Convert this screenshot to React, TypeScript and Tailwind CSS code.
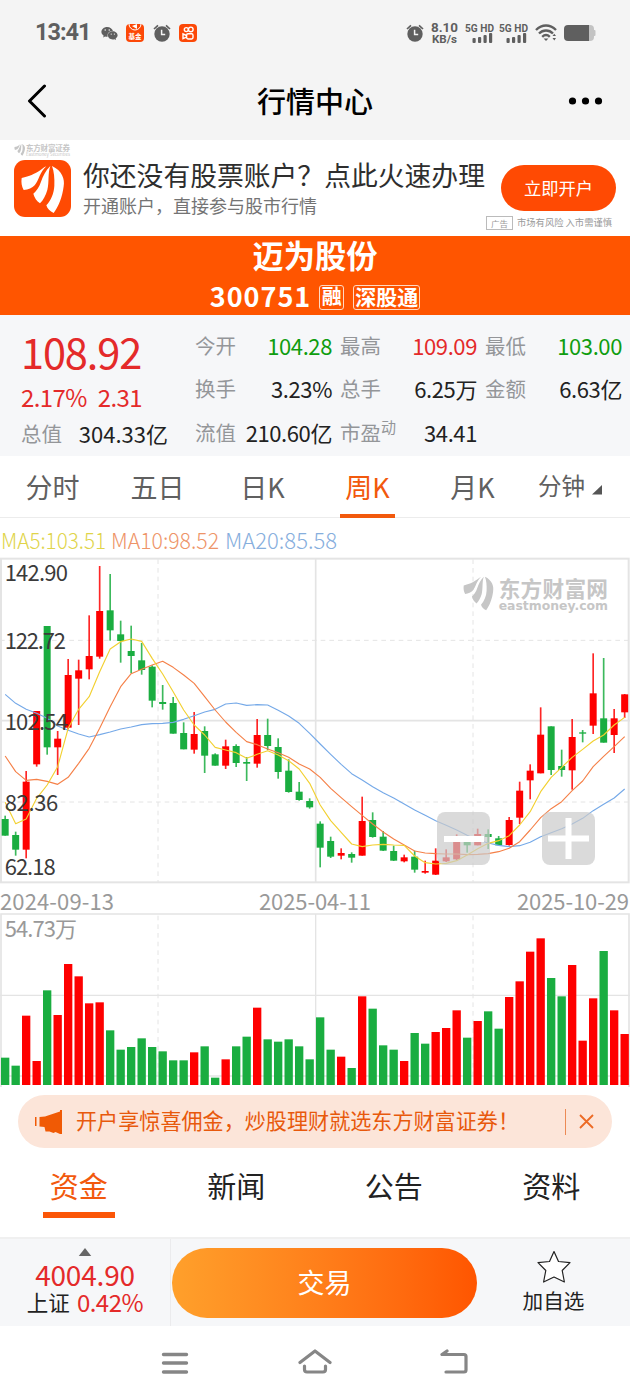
import React from "react";
import { FaWeixin } from "react-icons/fa";

type Candle = [number, number, number, number, number];

// up flag, high, body top, body bottom, low (3 plot units per css pixel)
const candles: Candle[] = [
    [0, 797, 807, 857, 857], [0, 845, 855, 899, 917], [1, 663, 695, 899, 925], [1, 483, 483, 643, 650],
    [0, 228, 228, 592, 614], [1, 543, 566, 592, 675], [1, 327, 375, 533, 538], [1, 329, 361, 386, 525],
    [1, 196, 318, 358, 388], [1, 48, 183, 320, 326], [0, 72, 181, 241, 272], [0, 212, 253, 273, 338],
    [0, 227, 303, 318, 370], [0, 279, 331, 360, 374], [0, 346, 350, 452, 472], [0, 405, 456, 462, 479],
    [0, 441, 459, 551, 551], [0, 517, 549, 598, 598], [1, 486, 552, 599, 611], [0, 529, 543, 617, 669],
    [0, 610, 613, 647, 647], [1, 569, 589, 647, 657], [0, 583, 588, 639, 651], [0, 621, 636, 641, 693],
    [1, 507, 555, 641, 653], [0, 506, 555, 588, 600], [0, 565, 591, 666, 686], [0, 628, 662, 726, 728],
    [0, 696, 725, 750, 752], [0, 745, 753, 772, 776], [0, 814, 821, 893, 952], [0, 860, 873, 920, 924],
    [1, 895, 909, 917, 928], [0, 907, 912, 923, 938], [1, 740, 813, 917, 917], [0, 787, 810, 861, 863],
    [0, 843, 860, 902, 903], [0, 887, 903, 932, 933], [1, 914, 922, 934, 937], [0, 902, 920, 959, 968],
    [1, 932, 963, 968, 971], [1, 895, 932, 974, 975], [1, 898, 922, 934, 936], [1, 853, 876, 928, 931],
    [0, 875, 875, 886, 908], [1, 836, 852, 886, 886], [0, 838, 852, 861, 897], [0, 858, 865, 886, 887],
    [1, 801, 810, 885, 887], [1, 695, 722, 803, 822], [1, 643, 662, 691, 748], [1, 472, 554, 670, 670],
    [0, 529, 529, 660, 675], [0, 599, 648, 660, 680], [1, 507, 561, 661, 719], [0, 540, 547, 551, 577],
    [1, 310, 430, 527, 552], [0, 324, 505, 578, 578], [1, 477, 505, 555, 609], [1, 432, 433, 487, 504],
];

const ma5 = [757, 821, 807, 745, 705, 650, 535, 478, 440, 365, 297, 275, 267, 274, 325, 372, 425, 480, 525, 555, 592, 600, 608, 625, 613, 602, 615, 632, 657, 700, 765, 812, 847, 882, 890, 885, 883, 885, 886, 918, 938, 942, 940, 932, 915, 896, 880, 872, 857, 825, 785, 725, 682, 652, 622, 598, 573, 555, 525, 502];
const ma10 = [618, 665, 691, 688, 694, 703, 682, 640, 595, 535, 470, 410, 371, 358, 345, 334, 352, 375, 400, 440, 480, 516, 547, 575, 584, 597, 608, 622, 642, 657, 682, 715, 743, 770, 796, 822, 846, 867, 885, 903, 909, 911, 912, 912, 914, 913, 911, 905, 895, 875, 840, 803, 776, 755, 722, 693, 650, 619, 590, 560];
const ma20 = [433, 460, 478, 490, 505, 528, 541, 552, 561, 554, 546, 537, 531, 524, 521, 520, 517, 508, 497, 486, 478, 462, 459, 466, 464, 465, 481, 498, 520, 550, 582, 613, 643, 671, 690, 710, 728, 744, 762, 780, 796, 812, 826, 840, 856, 870, 879, 886, 890, 887, 877, 860, 848, 836, 822, 805, 782, 763, 744, 717];

const volumes = [518, 542, 392, 528, 316, 390, 237, 274, 355, 352, 436, 494, 486, 460, 486, 499, 526, 526, 502, 484, 578, 523, 484, 455, 368, 463, 470, 463, 484, 523, 397, 494, 515, 549, 334, 371, 481, 494, 528, 444, 476, 441, 429, 376, 458, 408, 379, 431, 336, 289, 200, 160, 279, 334, 240, 467, 340, 198, 376, 447];

const RED = "#fe0000";
const GREEN = "#1aad40";
const px = (i: number) => 15.5 + i * 31.5;
const line = (ys: number[]) => ys.map((y, i) => `${px(i)},${y}`).join(" ");

// two bars where the volume colour differs from the candle colour
const volumeColor = (i: number) => {
    if (i === 40) return GREEN;
    if (i === 55) return RED;
    return candles[i][0] ? RED : GREEN;
};

const Blades = () => (
    <>
        <path d="M140 92C122 100 116 116 66 127C64 140 66 152 72 163C86 162 98 157 105 149C118 134 121 108 140 92Z" />
        <path d="M152 91C138 104 130 122 124 138C119 154 110 166 101 174C104 186 111 196 121 203C131 193 138 180 143 163C149 140 144 112 152 91Z" />
        <path d="M157 91C187 105 196 130 192 152C188 185 176 214 162 232C151 228 143 219 140 209C154 194 163 172 164 150C165 128 163 106 157 91Z" />
    </>
);

const Alarm = () => (
    <svg width="18" height="18" viewBox="0 0 18 18" fill="#5f5f5f">
        <circle cx="9" cy="10" r="7.7" />
        <path d="M1 5 5 1.3M17 5l-4-3.7" stroke="#5f5f5f" strokeWidth="1.7" />
        <path d="M8.6 5.8v4.8h3.6" fill="none" stroke="#f4f4f4" strokeWidth="1.5" />
    </svg>
);

const Signal = () => (
    <svg className="overflow-visible" width="30" height="21" viewBox="0 0 30 21" fill="#5f5f5f" fontFamily="Roboto">
        <text x="0" y="8.5" fontSize="10.5" fontWeight="700" textLength="29" lengthAdjust="spacingAndGlyphs">5G HD</text>
        <rect x="7.5" y="15" width="3.2" height="5" rx="1" />
        <rect x="13" y="14" width="3.2" height="6" rx="1" />
        <rect x="18.5" y="12" width="3.2" height="8" rx="1" />
        <rect x="24" y="10" width="3.2" height="10" rx="1" />
    </svg>
);

const StatusBar = () => (
    <div className="flex h-[66px] items-center pl-[35px] pr-[34px] text-[#5f5f5f]">
        <span className="w-[66px] font-['Roboto',sans-serif] text-[23.5px] font-bold tracking-[-1px]">13:41</span>
        <FaWeixin size={17} />
        <div className="ml-[8px] flex h-[18px] w-[18px] flex-col items-center overflow-hidden rounded-[4px] bg-[#fc4807] text-white">
            <svg width="14" height="8" viewBox="0 0 14 8">
                <path d="M1 0a6 6 0 0 0 12 0" fill="none" stroke="#fff" strokeWidth="1" />
                <path d="M4 2 9 0v5z" fill="#fff" />
            </svg>
            <span className="text-[6.5px] font-bold leading-[8px]">基金</span>
        </div>
        <div className="ml-[9px]"><Alarm /></div>
        <div className="ml-[8px] h-[18px] w-[18px] rounded-[4px] bg-[#fc4807]">
            <svg width="18" height="18" viewBox="0 0 18 18" fill="none" stroke="#fff" strokeWidth="1.4">
                <circle cx="7.3" cy="5.6" r="2" />
                <circle cx="11.8" cy="5.4" r="2.3" />
                <rect x="7.6" y="9.8" width="6.4" height="5.2" rx="1.4" />
                <path d="M7.4 11.5 4 9.9v4.8l3.4-1.6" />
            </svg>
        </div>
        <div className="ml-auto"><Alarm /></div>
        <svg className="ml-[7px] overflow-visible" width="28" height="22" viewBox="0 0 28 22" fill="#5f5f5f" fontFamily="Roboto" fontWeight="700">
            <text x="0" y="10" fontSize="13" textLength="27" lengthAdjust="spacingAndGlyphs">8.10</text>
            <text x="1" y="20.5" fontSize="11.5" textLength="25" lengthAdjust="spacingAndGlyphs">KB/s</text>
        </svg>
        <div className="ml-[6px]"><Signal /></div>
        <div className="ml-[4px]"><Signal /></div>
        <svg className="ml-[6px]" width="23" height="18" viewBox="0 0 23 18" fill="none" stroke="#5f5f5f" strokeWidth="2.4">
            <path d="M1 6C7 0 15 0 21 6M4 9.5c4-4 10-4 14 0M7.2 12.8c2.3-2.2 5.3-2.2 7.6 0" />
            <path d="M8.6 14.5 11 17l2.4-2.5z" fill="#5f5f5f" stroke="none" />
            <path d="m17.5 12 1.8-2.2L21 12zM17.5 14l1.8 2.4L21 14z" fill="#5f5f5f" stroke="none" />
        </svg>
        <svg className="ml-[6px]" width="32" height="16" viewBox="0 0 32 16">
            <rect x="20" width="10" height="16" rx="4" fill="#c3c3c3" />
            <rect x="29" y="5" width="2.5" height="6" rx="1" fill="#c3c3c3" />
            <path d="M4 0h21v16H4a4 4 0 0 1-4-4V4a4 4 0 0 1 4-4z" fill="#5f5f5f" />
        </svg>
    </div>
);

const NavBar = () => (
    <div className="flex h-[74px] items-center justify-between pb-[4px] pl-[27px] pr-[27px] text-black">
        <svg width="36" height="34" viewBox="0 0 36 34" fill="none" stroke="#000" strokeWidth="3" strokeLinecap="round" strokeLinejoin="round">
            <path d="M17.5 2 2.5 17l15 15" />
        </svg>
        <h1 className="-mt-[2px] text-[29px] font-medium leading-none">行情中心</h1>
        <svg width="36" height="8" viewBox="0 0 36 8">
            <circle cx="5.5" cy="4" r="3.6" />
            <circle cx="18.5" cy="4" r="3.6" />
            <circle cx="31.5" cy="4" r="3.6" />
        </svg>
    </div>
);

const AdBanner = () => (
    <div className="flex h-[96px] bg-white pl-[14px]">
        <div className="flex w-[69px] flex-col">
            <svg width="58" height="20" viewBox="0 0 58 20" fill="#c6c6c6">
                <g transform="translate(-5 -3.5) scale(.083)"><Blades /></g>
                <text x="12" y="11.3" fontSize="7.5" fontWeight="700" textLength="44">东方财富证券</text>
                <text x="12" y="15.8" fontSize="4.5" textLength="44" lengthAdjust="spacingAndGlyphs">Eastmoney Securities</text>
            </svg>
            <svg width="57" height="57" viewBox="43 73 171 171">
                <rect x="43" y="73" width="171" height="171" rx="33" fill="#ff4a03" />
                <g fill="#fff"><Blades /></g>
            </svg>
        </div>
        <div className="flex w-[418px] flex-col">
            <span className="mt-[21px] whitespace-nowrap text-[26.8px] leading-[28px] text-[#2e2e2e]">你还没有股票账户？点此火速办理</span>
            <span className="mt-[6px] whitespace-nowrap text-[18px] leading-[20px] text-[#747474]">开通账户，直接参与股市行情</span>
        </div>
        <div className="flex w-[129px] flex-col">
            <button className="mt-[25px] h-[46px] w-[115px] rounded-full bg-[#ff4a03] text-[17.3px] leading-none text-white">立即开户</button>
            <div className="-ml-[15px] mt-[5px] flex items-center text-[9.3px] leading-none text-[#9a9a9a]">
                <span className="flex h-[14px] w-[27px] items-center justify-center border border-[#bbb] text-[8.5px]">广告</span>
                <span className="ml-[4px] whitespace-nowrap">市场有风险 入市需谨慎</span>
            </div>
        </div>
    </div>
);

const StockTitle = () => (
    <div className="flex h-[79px] flex-col items-center bg-[#ff5500] text-white">
        <span className="mt-[2px] text-[31.3px] font-bold leading-[33px]">迈为股份</span>
        <div className="mt-[13px] flex h-[26px] items-center leading-none">
            <span className="-mt-[3px] text-[27px] font-bold tracking-[1px]">300751</span>
            <span className="ml-[8px] flex h-[25px] w-[25px] items-center justify-center rounded-[3px] border border-[#ffd9c2] pb-[2px] text-[20px] font-bold">融</span>
            <span className="ml-[9px] flex h-[25px] w-[67px] items-center justify-center rounded-[3px] border border-[#ffd9c2] pb-[2px] text-[21px] font-bold">深股通</span>
        </div>
    </div>
);

const Stat = ({ label, value, tone, sup }: { label: string; value: string; tone?: string; sup?: string }) => (
    <div className="flex h-[44px] w-[137px] items-center justify-between whitespace-nowrap leading-none">
        <span className="text-[20.5px] text-[#949699]">
            {label}
            {sup && <sup className="-top-[8px] text-[15px]">{sup}</sup>}
        </span>
        <span className={`text-[22px] tracking-[-0.4px] ${tone ?? "text-[#222]"}`}>{value}</span>
    </div>
);

const Quote = () => (
    <div className="flex h-[141px] bg-[#f6f7f9] pt-[8px] leading-none">
        <div className="flex w-[195px] flex-col pl-[21px]">
            <span className="mt-[7px] text-[41.5px] leading-[42px] tracking-[-1.1px] text-[#e42a2a]">108.92</span>
            <div className="mt-[12px] flex h-[26px] items-center gap-[11px] text-[24px] tracking-[-0.6px] text-[#e42a2a]">
                <span>2.17%</span>
                <span>2.31</span>
            </div>
            <div className="mt-px flex h-[44px] w-[147px] items-center justify-between">
                <span className="text-[20.5px] text-[#949699]">总值</span>
                <span className="text-[22px] text-[#222]">304.33亿</span>
            </div>
        </div>
        <div className="grid grid-cols-[145px_145px_137px] grid-rows-[43px_44px_45px]">
            <Stat label="今开" value="104.28" tone="text-[#0f9d0f]" />
            <Stat label="最高" value="109.09" tone="text-[#e42a2a]" />
            <Stat label="最低" value="103.00" tone="text-[#0f9d0f]" />
            <Stat label="换手" value="3.23%" />
            <Stat label="总手" value="6.25万" />
            <Stat label="金额" value="6.63亿" />
            <Stat label="流值" value="210.60亿" />
            <Stat label="市盈" sup="动" value="34.41" />
        </div>
    </div>
);

const PeriodTabs = () => (
    <div className="grid h-[62px] grid-cols-6 border-b border-[#ececec] bg-white text-[27px] leading-none text-[#606060]">
        {["分时", "五日", "日K", "周K", "月K"].map((t) => (
            <div key={t} className="relative flex items-center justify-center pb-px">
                {t === "周K" ? (
                    <>
                        <span className="text-[#f2590d]">{t}</span>
                        <span className="absolute -bottom-px h-[4px] w-[55px] bg-[#f2590d]" />
                    </>
                ) : (
                    <span>{t}</span>
                )}
            </div>
        ))}
        <div className="flex items-center justify-center pb-px pr-[14px] text-[23.5px]">
            分钟
            <svg className="ml-[7px] mt-[8px]" width="11" height="10" viewBox="0 0 11 10">
                <path d="M10 0v9.5H0z" fill="#555" />
            </svg>
        </div>
    </div>
);

const KLine = () => (
    <div className="relative h-[325px] bg-white">
        <svg className="block overflow-visible" width="630" height="325" viewBox="0 24 1890 975">
            <g fill="none" stroke="#e4e4e4">
                <rect x="3" y="26" width="1883" height="971" strokeWidth="6" />
                <path d="M0 512H1890M947 26V996" strokeWidth="5" />
                <path d="M0 271H1890M0 756H1890M474 28V996M1419 28V996" strokeWidth="3" strokeDasharray="14 12" />
            </g>
            {candles.map(([up, high, top, bottom, low], i) => (
                <g key={i} fill={up ? RED : GREEN}>
                    <rect x={px(i) - 2.5} y={high} width="5" height={low - high} opacity="0.85" />
                    <rect x={px(i) - 10.5} y={top} width="21" height={bottom - top} />
                </g>
            ))}
            <g fill="none" strokeWidth="3.4" strokeLinejoin="round">
                <polyline points={line(ma20)} stroke="#75a9e8" />
                <polyline points={line(ma10)} stroke="#f58048" />
                <polyline points={line(ma5)} stroke="#f2d030" />
            </g>
            <g fontSize="66" fill="#3b3b3b">
                <text x="14" y="94" textLength="190">142.90</text>
                <text x="14" y="298" textLength="184">122.72</text>
                <text x="14" y="539" textLength="190">102.54</text>
                <text x="14" y="783" textLength="161">82.36</text>
                <text x="14" y="975" textLength="153">62.18</text>
            </g>
            <g fill="#c6c6c6" fontWeight="700">
                <g transform="translate(1345 16) scale(.7 .71)"><Blades /></g>
                <text x="1496" y="141" fontSize="65" textLength="328">东方财富网</text>
                <text x="1496" y="180" fontSize="38" fontFamily="DejaVu Sans" textLength="328" lengthAdjust="spacingAndGlyphs">eastmoney.com</text>
            </g>
        </svg>
        <button className="absolute left-[437px] top-[254px] flex h-[53px] w-[53px] items-center justify-center rounded-[8px] bg-[#cacaca]/70">
            <span className="h-[6px] w-[40px] bg-white" />
        </button>
        <button className="absolute left-[542px] top-[254px] flex h-[53px] w-[53px] items-center justify-center rounded-[8px] bg-[#cacaca]/70">
            <svg width="41" height="41" viewBox="0 0 41 41" stroke="#fff" strokeWidth="6">
                <path d="M20.5 0v41M0 20.5h41" />
            </svg>
        </button>
    </div>
);

const Dates = () => (
    <svg className="block overflow-visible" width="630" height="30" viewBox="0 0 630 30" fontSize="22" fill="#999">
        <text x="0" y="27" textLength="114">2024-09-13</text>
        <text x="259" y="27" textLength="112">2025-04-11</text>
        <text x="517" y="27" textLength="112">2025-10-29</text>
    </svg>
);

const VolumeChart = () => (
    <svg className="block overflow-visible" width="630" height="174" viewBox="0 84 1890 522">
        <g fill="none" stroke="#e4e4e4">
            <path d="M3 606V87H1887V606" strokeWidth="5" />
            <path d="M0 331H1890M947 87V600M0 573H1890" strokeWidth="4" />
            <path d="M474 92V600M1419 92V600" strokeWidth="3" strokeDasharray="14 12" />
        </g>
        {volumes.map((top, i) => (
            <rect key={i} x={px(i) - 12.5} y={top} width="25" height={600 - top} fill={volumeColor(i)} />
        ))}
        <text x="14" y="156" fontSize="66" fill="#999" textLength="217">54.73万</text>
    </svg>
);

const Promo = () => (
    <div className="mx-[18px] mt-[8px] flex h-[53px] items-center rounded-full bg-[#fce5d9] text-[#e8590c]">
        <svg className="ml-[17px]" width="28" height="26" viewBox="0 0 28 26" fill="#f05a05">
            <rect x="0" y="8" width="1.5" height="9" />
            <path d="M4.500 8 10 7.500 25 2.500V1H27v24h-2l-4.500-2-2 1-4-1.500h-4l-1-4.500-5-.5z" />
        </svg>
        <span className="-mt-px ml-[13px] whitespace-nowrap text-[21.1px] leading-none">开户享惊喜佣金，炒股理财就选东方财富证券！</span>
        <span className="ml-auto h-[26px] w-px bg-[#ec8a55]" />
        <svg className="ml-[13px] mr-[18px]" width="15" height="15" viewBox="0 0 15 15" stroke="#ec6a25" strokeWidth="1.8">
            <path d="m1 1 13 13M14 1 1 14" />
        </svg>
    </div>
);

const InfoTabs = () => (
    <div className="grid h-[91px] grid-cols-4 border-b-2 border-[#f0f0f0] bg-white text-[29px] leading-none text-[#222]">
        {["资金", "新闻", "公告", "资料"].map((t, i) => (
            <div key={t} className="flex flex-col items-center pt-[23px]">
                <span className={i === 0 ? "text-[#f2590d]" : ""}>{t}</span>
                {i === 0 && <span className="mt-[12px] h-[6px] w-[72px] bg-[#fb5607]" />}
            </div>
        ))}
    </div>
);

const BottomBar = () => (
    <div className="flex h-[87px] bg-[#f6f7f9] leading-none">
        <div className="flex w-[171px] flex-col items-center border-r border-[#ebebed]">
            <svg className="mt-[9px]" width="14" height="8" viewBox="0 0 14 9">
                <path d="M7 0l7 9H0z" fill="#666" />
            </svg>
            <span className="mt-[4px] text-[28px] leading-[28px] tracking-[-0.2px] text-[#e42a2a]">4004.90</span>
            <div className="mt-[2px] flex h-[24px] items-center gap-[7px]">
                <span className="text-[21.5px] text-[#222]">上证</span>
                <span className="text-[24px] tracking-[-0.5px] text-[#e42a2a]">0.42%</span>
            </div>
        </div>
        <button className="ml-[1px] mt-[9px] h-[70px] w-[305px] rounded-full bg-linear-to-r from-[#ffa02b] to-[#ff5500] pb-[3px] text-[27px] text-white">交易</button>
        <div className="flex flex-1 flex-col items-center">
            <svg className="mt-[11px]" width="34" height="33" viewBox="0 0 34 33" fill="#fff" stroke="#222" strokeWidth="1.2" strokeLinejoin="round">
                <path d="M17 1.500 21.500 11.500 33 12.700 25.200 20.500 27.400 32 17 27 6.600 32 8.800 20.500 1 12.700 12.500 11.500z" />
            </svg>
            <span className="mt-[7px] text-[20.6px] text-[#222]">加自选</span>
        </div>
    </div>
);

const SystemNav = () => (
    <div className="flex h-[74px] items-center justify-center gap-[106px] bg-white">
        <svg width="34" height="28" viewBox="0 0 34 28" stroke="#868686" strokeWidth="3.4" strokeLinecap="round">
            <path d="M5.500 5.500h23M5.500 14h23M5.500 23h23" />
        </svg>
        <svg width="34" height="28" viewBox="0 0 34 28" fill="none" stroke="#868686" strokeWidth="3.2" strokeLinecap="round" strokeLinejoin="round">
            <path d="M2 13.500 17 2 32 13.500M6.500 17v3.500q0 2.500 2.500 2.500h16q2.500 0 2.500-2.500V17" />
        </svg>
        <svg width="34" height="28" viewBox="0 0 34 28" fill="none" stroke="#868686" strokeWidth="3.2" strokeLinecap="round" strokeLinejoin="round">
            <path d="M9 2 4 5.500h22q2 0 2 2V21q0 2-2 2H8" />
        </svg>
    </div>
);

const App = () => {
    return (
        <div className="flex h-[1400px] w-[630px] flex-col overflow-hidden bg-white font-['Noto_Sans_CJK_SC',sans-serif]">
            <div className="bg-[#f4f4f4]">
                <StatusBar />
                <NavBar />
            </div>
            <AdBanner />
            <StockTitle />
            <Quote />
            <PeriodTabs />
            <div className="flex h-[40px] items-center bg-white pl-px pt-[5px] leading-none">
                <svg className="overflow-visible" width="336" height="24" viewBox="0 0 336 24" fontSize="22" fontWeight="300">
                    <text x="0" y="20" fill="#e0d44a" textLength="105" lengthAdjust="spacingAndGlyphs">MA5:103.51</text>
                    <text x="110" y="20" fill="#ee9468" textLength="108" lengthAdjust="spacingAndGlyphs">MA10:98.52</text>
                    <text x="224" y="20" fill="#86aedd" textLength="112" lengthAdjust="spacingAndGlyphs">MA20:85.58</text>
                </svg>
            </div>
            <KLine />
            <Dates />
            <VolumeChart />
            <Promo />
            <InfoTabs />
            <BottomBar />
            <SystemNav />
        </div>
    );
};

export default App;
